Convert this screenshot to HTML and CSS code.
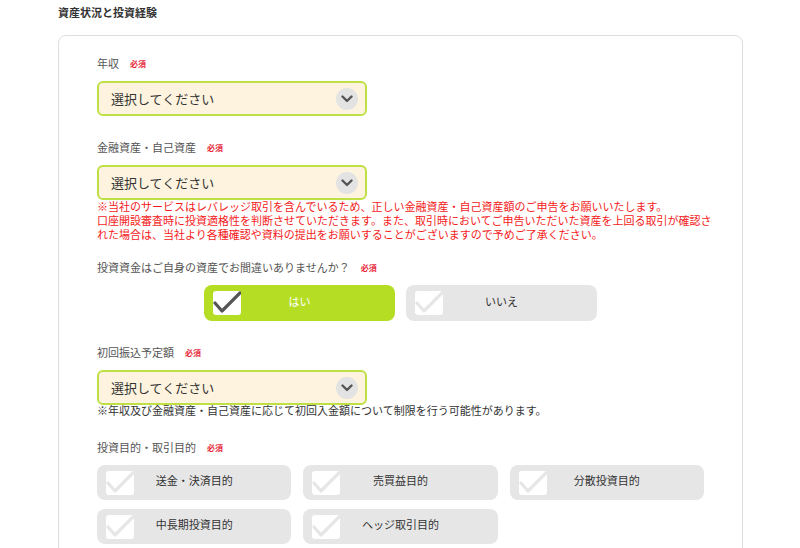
FILE: index.html
```html
<!DOCTYPE html>
<html lang="ja">
<head>
    <meta charset="UTF-8">
    <meta name="viewport" content="width=device-width, initial-scale=1.0">
    <title>資産状況と投資経験</title>
    <link rel="stylesheet" href="styles.css">
</head>
<body>
    <h2 class="section-title">資産状況と投資経験</h2>
    <div class="card">
        <div class="field">
            <p class="label">年収<span class="req">必須</span></p>
            <div class="select">
                <span>選択してください</span>
                <span class="arrow"><svg width="12" height="8" viewBox="0 0 12 8"><polyline points="1.5,1.5 6,6 10.5,1.5" fill="none" stroke="#555" stroke-width="2.4" stroke-linecap="round" stroke-linejoin="round"/></svg></span>
            </div>
        </div>

        <div class="field field-red">
            <p class="label">金融資産・自己資産<span class="req">必須</span></p>
            <div class="select">
                <span>選択してください</span>
                <span class="arrow"><svg width="12" height="8" viewBox="0 0 12 8"><polyline points="1.5,1.5 6,6 10.5,1.5" fill="none" stroke="#555" stroke-width="2.4" stroke-linecap="round" stroke-linejoin="round"/></svg></span>
            </div>
            <p class="note note-red">※当社のサービスはレバレッジ取引を含んでいるため、正しい金融資産・自己資産額のご申告をお願いいたします。<br>口座開設審査時に投資適格性を判断させていただきます。また、取引時においてご申告いただいた資産を上回る取引が確認さ<br>れた場合は、当社より各種確認や資料の提出をお願いすることがございますので予めご了承ください。</p>
        </div>

        <div class="field">
            <p class="label">投資資金はご自身の資産でお間違いありませんか？<span class="req">必須</span></p>
            <div class="yesno">
                <div class="choice active">
                    <span class="box"><svg width="28" height="24" viewBox="0 0 28 24"><rect width="28" height="24" rx="3" fill="#fff"/><polyline points="2,12 9,20 27,2" fill="none" stroke="#555" stroke-width="3.2" stroke-linecap="round" stroke-linejoin="round"/></svg></span>
                    <span class="text">はい</span>
                </div>
                <div class="choice">
                    <span class="box"><svg width="28" height="24" viewBox="0 0 28 24"><rect width="28" height="24" rx="3" fill="#fff"/><polyline points="2,12 9,20 27,2" fill="none" stroke="#e6e6e6" stroke-width="3.2" stroke-linecap="round" stroke-linejoin="round"/></svg></span>
                    <span class="text">いいえ</span>
                </div>
            </div>
        </div>

        <div class="field field-gray">
            <p class="label">初回振込予定額<span class="req">必須</span></p>
            <div class="select">
                <span>選択してください</span>
                <span class="arrow"><svg width="12" height="8" viewBox="0 0 12 8"><polyline points="1.5,1.5 6,6 10.5,1.5" fill="none" stroke="#555" stroke-width="2.4" stroke-linecap="round" stroke-linejoin="round"/></svg></span>
            </div>
            <p class="note note-gray">※年収及び金融資産・自己資産に応じて初回入金額について制限を行う可能性があります。</p>
        </div>

        <div class="field">
            <p class="label">投資目的・取引目的<span class="req">必須</span></p>
            <div class="purpose">
                <div class="choice">
                    <span class="box"><svg width="28" height="24" viewBox="0 0 28 24"><rect width="28" height="24" rx="3" fill="#fff"/><polyline points="2,12 9,20 27,2" fill="none" stroke="#e6e6e6" stroke-width="3.2" stroke-linecap="round" stroke-linejoin="round"/></svg></span>
                    <span class="text">送金・決済目的</span>
                </div>
                <div class="choice">
                    <span class="box"><svg width="28" height="24" viewBox="0 0 28 24"><rect width="28" height="24" rx="3" fill="#fff"/><polyline points="2,12 9,20 27,2" fill="none" stroke="#e6e6e6" stroke-width="3.2" stroke-linecap="round" stroke-linejoin="round"/></svg></span>
                    <span class="text">売買益目的</span>
                </div>
                <div class="choice">
                    <span class="box"><svg width="28" height="24" viewBox="0 0 28 24"><rect width="28" height="24" rx="3" fill="#fff"/><polyline points="2,12 9,20 27,2" fill="none" stroke="#e6e6e6" stroke-width="3.2" stroke-linecap="round" stroke-linejoin="round"/></svg></span>
                    <span class="text">分散投資目的</span>
                </div>
                <div class="choice">
                    <span class="box"><svg width="28" height="24" viewBox="0 0 28 24"><rect width="28" height="24" rx="3" fill="#fff"/><polyline points="2,12 9,20 27,2" fill="none" stroke="#e6e6e6" stroke-width="3.2" stroke-linecap="round" stroke-linejoin="round"/></svg></span>
                    <span class="text">中長期投資目的</span>
                </div>
                <div class="choice">
                    <span class="box"><svg width="28" height="24" viewBox="0 0 28 24"><rect width="28" height="24" rx="3" fill="#fff"/><polyline points="2,12 9,20 27,2" fill="none" stroke="#e6e6e6" stroke-width="3.2" stroke-linecap="round" stroke-linejoin="round"/></svg></span>
                    <span class="text">ヘッジ取引目的</span>
                </div>
            </div>
        </div>
    </div>
</body>
</html>
```

FILE: styles.css
```css
body {
    margin: 0;
    font-family: "Noto Sans CJK JP", "Noto Sans", sans-serif;
    color: #333;
    background: #fff;
}
.section-title {
    margin: 0 0 15px 58px;
    padding-top: 4px;
    font-size: 11px;
    line-height: 16px;
    font-weight: bold;
    color: #333;
}
.card {
    margin-left: 58px;
    width: 607px;
    border: 1px solid #ddd;
    border-radius: 8px;
    padding: 19px 38px 40px;
}
.field {
    margin-bottom: 23px;
}
.field-red {
    margin-bottom: 18px;
}
.field-gray {
    margin-bottom: 22px;
}
.label {
    margin: 0 0 9px;
    font-size: 11px;
    line-height: 16px;
    color: #555;
}
.req {
    margin-left: 11px;
    font-size: 8px;
    font-weight: bold;
    color: #e8283a;
    vertical-align: 1px;
}
.select {
    width: 270px;
    height: 35px;
    box-sizing: border-box;
    border: 2px solid #bfe044;
    border-radius: 6px;
    background: #fdf3de;
    display: flex;
    align-items: center;
    justify-content: space-between;
    padding: 0 7px 0 12px;
    font-size: 13px;
    color: #333;
}
.arrow {
    width: 22px;
    height: 22px;
    border-radius: 50%;
    background: #e3e3e3;
    display: flex;
    align-items: center;
    justify-content: center;
}
.note {
    margin: -2px 0 0;
    font-size: 11px;
    line-height: 14px;
    white-space: nowrap;
}
.note-red {
    margin-top: -1px;
    color: #f41a1a;
}
.note-gray {
    color: #333;
}
.yesno {
    display: flex;
    justify-content: center;
    gap: 11px;
}
.yesno .choice {
    width: 191px;
    height: 36px;
}
.purpose {
    display: grid;
    grid-template-columns: repeat(3, 1fr);
    gap: 9px 12px;
}
.purpose .choice {
    height: 35px;
}
.choice {
    display: grid;
    grid-template-columns: 38px 1fr 38px;
    align-items: center;
    background: #e6e6e6;
    border-radius: 8px;
    font-size: 11px;
    color: #333;
}
.choice .box {
    margin-left: 9px;
    display: flex;
}
.choice .text {
    text-align: center;
    padding-bottom: 5px;
}
.choice.active {
    background: #b5dd23;
    color: #fff;
}
```
